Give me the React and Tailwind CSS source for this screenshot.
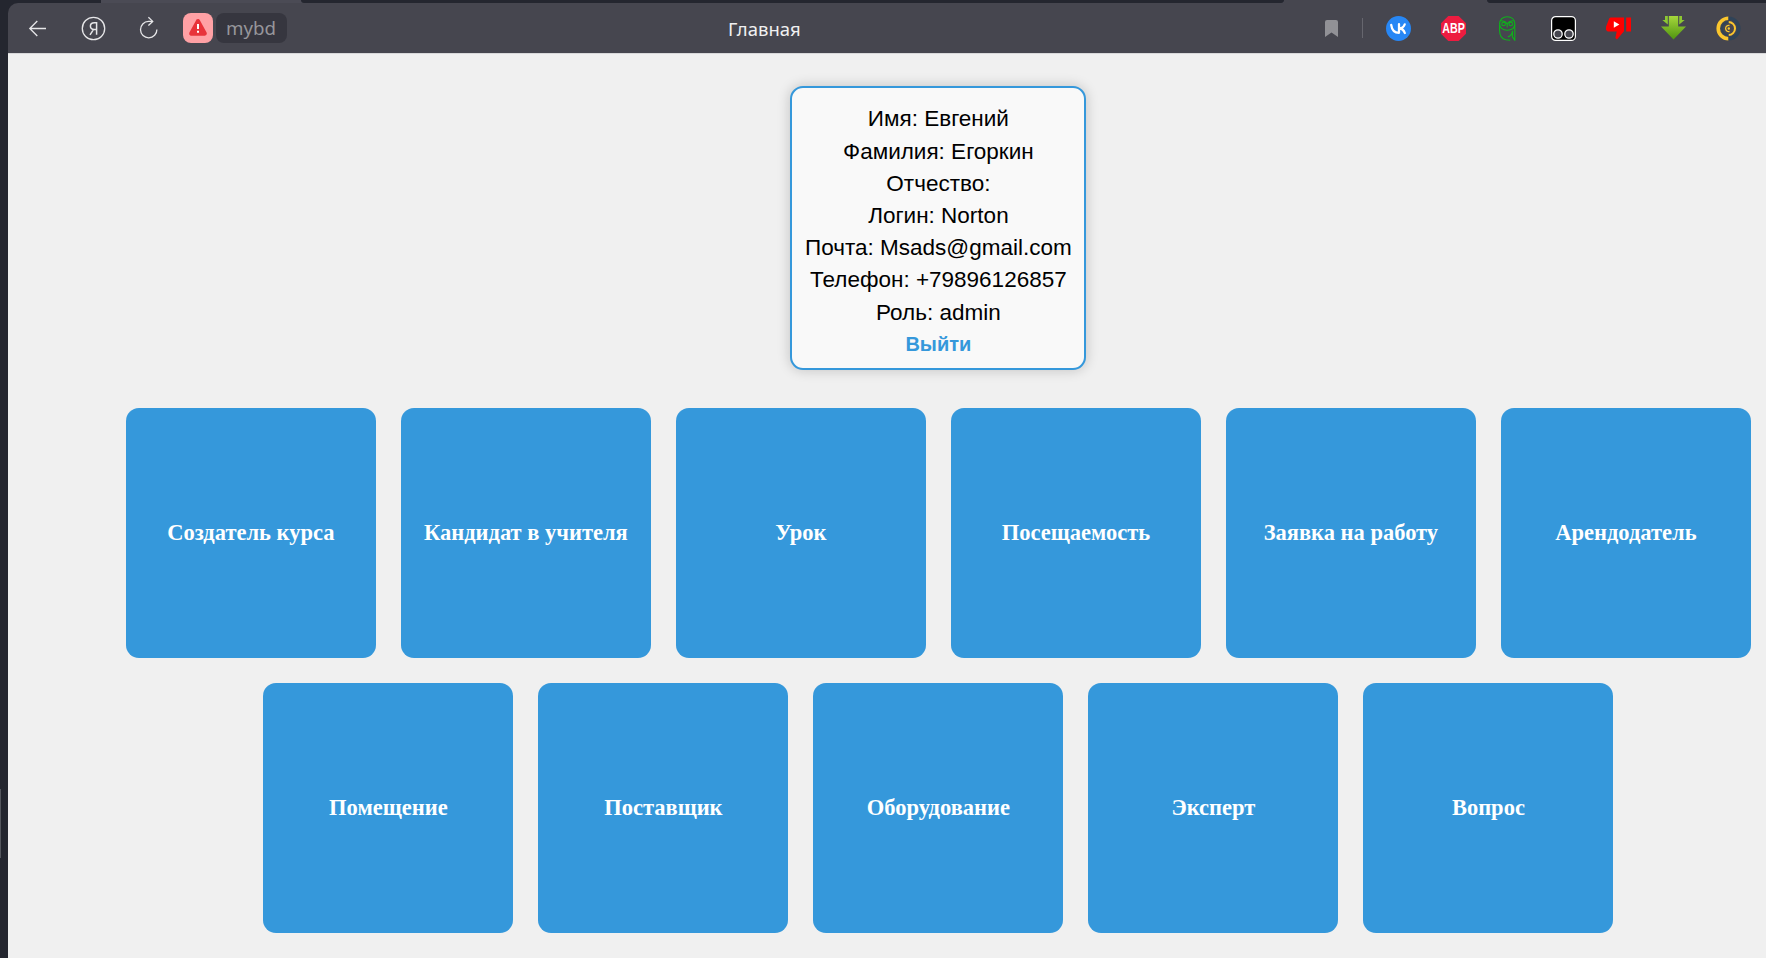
const rows = [
  ['Создатель курса', 'Кандидат в учителя', 'Урок', 'Посещаемость', 'Заявка на работу', 'Арендодатель'],
  ['Помещение', 'Поставщик', 'Оборудование', 'Эксперт', 'Вопрос'],
];

const profile = [
  'Имя: Евгений',
  'Фамилия: Егоркин',
  'Отчество:',
  'Логин: Norton',
  'Почта: Msads@gmail.com',
  'Телефон: +79896126857',
  'Роль: admin',
];

function BackIcon() {
  return (
    <svg className="h-[25px] w-[25px]" viewBox="0 0 25 25" fill="none" stroke="#e6e6e8" strokeWidth="1.3">
      <path d="M21 12.500H4.800M12.300 5L4.800 12.500l7.500 7.500" />
    </svg>
  );
}

function YandexIcon() {
  return (
    <svg className="h-[25px] w-[25px]" viewBox="0 0 25 25" fill="none" stroke="#e6e6e8" strokeWidth="1.3">
      <circle cx="12.500" cy="12.500" r="11.200" />
      <path d="M15.600 18.800V6.700h-2.200c-2.600 0-4 1.300-4 3.400 0 2.200 1.400 3.400 3.800 3.400h2.400M12.600 13.400L9 18.800" strokeWidth="1.500" />
    </svg>
  );
}

function ReloadIcon() {
  return (
    <svg className="h-[25px] w-[25px]" viewBox="0 0 25 25" fill="none" stroke="#e6e6e8" strokeWidth="1.3">
      <path d="M16.600 5.400H12.500A8.200 8.200 0 1 0 20.900 13.500" />
      <path d="M12.400 1.300l4.300 4.100-4.300 4.100" />
    </svg>
  );
}

function WarningIcon() {
  return (
    <svg className="h-[30px] w-[30px]" viewBox="0 0 30 30">
      <path d="M15 8.200L8.300 20.600h13.400z" fill="#e8333a" stroke="#e8333a" strokeWidth="4.300" strokeLinejoin="round" />
      <path d="M15 11v5M15 17.800v2" stroke="#fff" strokeWidth="2" />
    </svg>
  );
}

function BookmarkIcon() {
  return (
    <svg className="h-[17px] w-[13px]" viewBox="0 0 13 17">
      <path d="M0 2a2 2 0 0 1 2-2h9a2 2 0 0 1 2 2v15L6.500 12.500 0 17z" fill="#919196" />
    </svg>
  );
}

function VkIcon() {
  return (
    <svg className="h-[25px] w-[25px]" viewBox="0 0 25 25">
      <circle cx="12.500" cy="12.500" r="12.500" fill="#2787f5" />
      <path d="M5.200 8.800c.7 5.200 3.500 8 7.800 8V8.200M18.700 8.400c-.9 2.300-2.800 3.900-5.300 4.100 2.500.1 4.500 1.800 5.400 4.500" fill="none" stroke="#fff" strokeWidth="2.300" strokeLinecap="round" strokeLinejoin="round" />
    </svg>
  );
}

function AbpIcon() {
  return (
    <svg className="h-[25px] w-[25px] overflow-visible" viewBox="0 0 25 25">
      <path d="M7.300 0h10.400L25 7.300v10.400L17.700 25H7.300L0 17.700V7.300z" fill="#ed1c40" />
      <text x="12.500" y="17.300" textAnchor="middle" textLength="22.500" lengthAdjust="spacingAndGlyphs" fontFamily="'Liberation Sans', Arial, sans-serif" fontWeight="700" fontSize="13.800" fill="#fff">ABP</text>
    </svg>
  );
}

function OwlIcon() {
  return (
    <svg className="h-[25px] w-[25px]" viewBox="0 0 25 25" fill="none" stroke="#0eb41a" strokeWidth="1.100">
      <path d="M3.600 8C3.600 3.500 6.800 .8 11.200 .8s7.600 2.700 7.600 7.200c0 3.600-2.800 6.200-7.600 6.200S3.600 11.600 3.600 8z" />
      <path d="M3.600 9v5.500c0 5.500 2.400 8.500 6.200 9.200l4.500.6M18.800 8.500v15.700l-2.400-3.400v-6c0 3-1.600 5.200-4.600 6.200" />
      <circle cx="7.600" cy="8" r="1.800" />
      <circle cx="14.800" cy="8" r="1.800" />
      <path d="M4.500 4.800c3 0 5.500 1 6.700 3.200 1.200-2.200 3.700-3.200 6.700-3.200M11.200 8v3.500" />
    </svg>
  );
}

function TampermonkeyIcon() {
  return (
    <svg className="h-[25px] w-[25px]" viewBox="0 0 25 25">
      <rect x=".6" y=".6" width="23.800" height="23.800" rx="4" fill="#000" stroke="#fff" strokeWidth="1.200" />
      <circle cx="7" cy="18" r="4.200" fill="#46464f" stroke="#fff" strokeWidth="1.300" />
      <circle cx="18" cy="18" r="4.200" fill="#46464f" stroke="#fff" strokeWidth="1.300" />
    </svg>
  );
}

function DislikeIcon() {
  return (
    <svg className="h-[25px] w-[25px]" viewBox="0 0 25 25">
      <path d="M4.500 1.500H18v13.800l-7 8.200-1.600-1.600 1.300-6.400H1.700L0 14v-3.200L3.300 2.300z" fill="#f00" />
      <rect x="20.200" y="1.500" width="4.800" height="14" fill="#f00" />
      <path d="M7.800 5.300l5.600 3.200-5.600 3.300z" fill="#fff" />
    </svg>
  );
}

function DownloadIcon() {
  return (
    <svg className="h-[25px] w-[25px]" viewBox="0 0 25 25">
      <defs>
        <linearGradient id="green" x1="0" y1="0" x2="0" y2="1">
          <stop offset="0" stopColor="#a6d83c" />
          <stop offset="1" stopColor="#4f9410" />
        </linearGradient>
      </defs>
      <path d="M4 0h2.800v8.500L1.300 4H4zM21 0h-2.800v8.500L23.700 4H21z" fill="#8cc832" />
      <path d="M7.800 0h9.400v10.500H25L12.500 23.500 0 10.500h7.800z" fill="url(#green)" />
    </svg>
  );
}

function TargetIcon() {
  return (
    <svg className="h-[25px] w-[25px]" viewBox="0 0 25 25" fill="none">
      <path d="M12.500 2.200A10.300 10.300 0 0 0 12.500 22.800" stroke="#fbc62d" strokeWidth="3.600" />
      <path d="M12.500 2.200A10.300 10.300 0 0 1 12.500 22.800" stroke="#2f4358" strokeWidth="3.600" />
      <path d="M12.500 6A6.500 6.500 0 0 1 12.500 19" stroke="#fbc62d" strokeWidth="2" />
      <path d="M12.500 6A6.500 6.500 0 0 0 12.500 19" stroke="#2f4358" strokeWidth="2" />
      <path d="M13.500 9.500a3.100 3.100 0 1 0 0 6" stroke="#fbc62d" strokeWidth="1.300" />
      <circle cx="12.800" cy="12.500" r="1.200" fill="#fbc62d" />
    </svg>
  );
}

function BrowserBar() {
  return (
    <header className="flex h-[50px] shrink-0 items-center rounded-tl-[10px] bg-[#46464f] pr-[25px] pl-[17px]">
      <div className="flex w-[262px] items-center">
        <BackIcon />
        <div className="ml-[31px]"><YandexIcon /></div>
        <div className="ml-[30px]"><ReloadIcon /></div>
        <div className="ml-[22px] rounded-[8px] bg-[#ffa1a5]"><WarningIcon /></div>
        <div className="ml-[3px] flex h-[30px] w-[71px] shrink-0 items-center justify-center rounded-[8px] bg-[#36363f] pr-px font-['Noto_Sans',sans-serif] text-[18.700px] text-[#96969b]">
          <span className="pt-[1px]">mybd</span>
        </div>
      </div>
      <h1 className="ml-[441px] pt-[2px] font-['Noto_Sans',sans-serif] text-[18.500px] whitespace-nowrap text-[#f0f0f1]">Главная</h1>
      <div className="ml-auto flex items-center">
        <BookmarkIcon />
        <div className="mr-[23px] ml-[24px] h-5 w-px bg-[#66666e]" />
        <div className="flex gap-[30px]">
          <VkIcon />
          <AbpIcon />
          <OwlIcon />
          <TampermonkeyIcon />
          <DislikeIcon />
          <DownloadIcon />
          <TargetIcon />
        </div>
      </div>
    </header>
  );
}

export default function App() {
  return (
    <div className="flex h-[958px] w-[1766px] overflow-hidden bg-[#24262f]">
      <aside className="w-2 shrink-0 pt-[789px]">
        <div className="h-[69px] w-px bg-[#55575e]" />
      </aside>
      <div className="flex min-w-0 flex-1 flex-col">
        <div className="flex h-[3px] shrink-0 pl-[93px]">
          <div className="flex flex-1 bg-[#4b4b55]">
            <div className="ml-[200px] w-[983px] rounded-b-[8px] bg-[#24262f]" />
            <div className="w-[203px] bg-[#46464f]" />
            <div className="flex-1 rounded-bl-[8px] bg-[#24262f]" />
          </div>
        </div>
        <BrowserBar />
        <main className="flex flex-1 flex-col items-center border-t border-[#d8d8da] bg-[#f0f0f0] pt-[32px] pl-[102.800px]">
          <section className="flex h-[284px] w-[296px] flex-col items-center rounded-[13px] border-2 border-[#3598db] bg-[#f9f9f9] pt-[15.400px] font-['Liberation_Sans',Arial,sans-serif] text-[22.5px] leading-[32.200px] text-black shadow-[0_0_13px_rgba(0,0,0,0.2)]">
            {profile.map((line) => (
              <p key={line} className="whitespace-nowrap">{line}</p>
            ))}
            <a className="-mt-[0.400px] text-[20px] font-bold text-[#3598db]">Выйти</a>
          </section>
          <div className="mt-[38px] flex flex-col items-center gap-[25px]">
            {rows.map((row, i) => (
              <div key={i} className="flex gap-[25px]">
                {row.map((name) => (
                  <div key={name} className="flex h-[250px] w-[250px] shrink-0 items-center justify-center rounded-[13px] bg-[#3598db] font-['Liberation_Serif','Times_New_Roman',serif] text-[22.5px] font-bold whitespace-nowrap text-white">
                    {name}
                  </div>
                ))}
              </div>
            ))}
          </div>
        </main>
      </div>
    </div>
  );
}
